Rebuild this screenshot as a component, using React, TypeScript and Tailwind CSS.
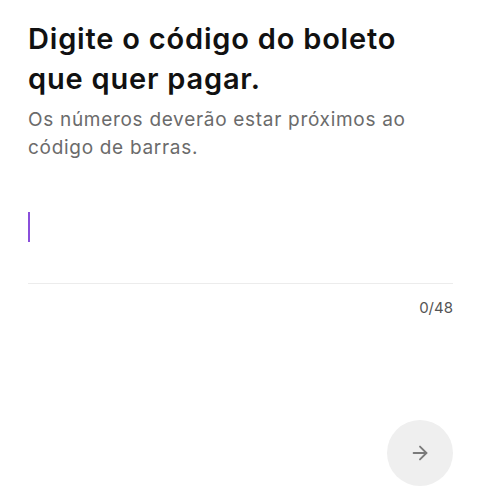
import React, { useState } from 'react';
import { ArrowRight } from 'lucide-react';

const MAX = 48;

const App: React.FC = () => {
  const [code] = useState('');

  return (
    <div
      className="flex h-[500px] w-full flex-col bg-white px-7"
      style={{ fontFamily: 'Inter, "Noto Sans", sans-serif' }}
    >
      <h1 className="mt-[19px] max-w-[410px] text-[29px] font-semibold leading-[40px] tracking-[0.8px] text-[#111111]">
        Digite o código do boleto que quer pagar.
      </h1>
      <p className="mt-[7px] max-w-[395px] text-[19px] leading-[28px] tracking-[0.7px] text-[#6b6b6b]">
        Os números deverão estar próximos ao código de barras.
      </p>

      <div className="mt-[50px] flex h-[72px] items-start border-b border-[#ececec]">
        <span className="h-[30px] w-[2px] bg-[#8a4fdb]" />
        {code}
      </div>
      <div className="mt-[15px] text-right text-[15px] leading-[18px] text-[#555555]">
        {code.length}/{MAX}
      </div>

      <div className="mt-auto mb-[14px] flex justify-end">
        <button className="flex h-[66px] w-[66px] items-center justify-center rounded-full bg-[#efefef] text-[#7a7a7a]">
          <ArrowRight className="h-[22px] w-[22px]" strokeWidth={2} />
        </button>
      </div>
    </div>
  );
};

export default App;
